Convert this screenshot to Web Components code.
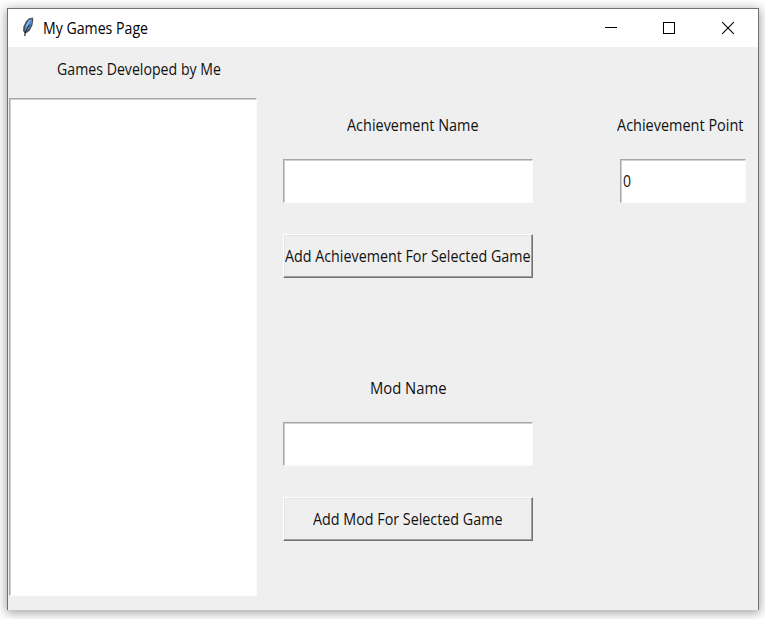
<!DOCTYPE html>
<html lang="en"><head><meta charset="utf-8"><title>My Games Page</title>
<style>
html,body{margin:0;width:765px;height:619px;overflow:hidden;background:#fff}
body{font-family:"Open Sans","Noto Sans",sans-serif;font-size:15.5px;color:#111}
</style></head><body>
<games-page></games-page>
<script>
const define=(name,html,setup)=>customElements.define(name,class extends HTMLElement{
  connectedCallback(){
    if(this.shadowRoot)return;
    const t=document.createElement('template');t.innerHTML=html;
    this.attachShadow({mode:'open'}).append(t.content.cloneNode(true));
    if(setup)setup(this,this.shadowRoot);
  }
});

/* A line of text condensed to the width given in its "width" attribute. */
define('fit-text',`<style>
:host{display:block;height:20px;line-height:20px;white-space:nowrap;flex:none}
span{display:inline-block;transform-origin:0 50%}
</style><span><slot></slot></span>`,(el,root)=>{
  const w=+el.getAttribute('width'),s=root.querySelector('span');
  el.style.width=w+'px';
  s.style.transform='scaleX('+w/s.getBoundingClientRect().width+')';
});

define('feather-icon',`<style>:host{display:block;width:14px;height:21px}svg{display:block}</style>
<svg width="14" height="21" viewBox="0 0 14 21">
<path d="M3.6 16.5 2 13.6 2.5 9.2 5 4.2 8 1.2 11.9 .4 12.3 3 11.4 8.5 8.8 13.6 6 15.8Z" fill="#4a4f57"/>
<path d="M3.8 13.2 4 9.6 6.3 5.1 9 2.4 11.2 1.8 10.7 6.5 8.2 11.3 5.5 14.4Z" fill="#4f8fd3"/>
<path d="M9 3 5.4 9.4" stroke="#8db9e6" stroke-width="1.4"/>
<path d="M8.6 7.6 6 11.6 4.6 15.2" stroke="#172230" stroke-width="1" fill="none"/>
<path d="M4.4 14.5 3.8 19" stroke="#333" stroke-width="1.3"/></svg>`);

define('title-bar',`<style>
:host{display:flex;height:38px;background:#fff;color:#000;align-items:center}
feather-icon{margin:-1px 8px 0 13px}
svg{display:block;margin-left:auto}
</style><feather-icon></feather-icon><fit-text width="105"><slot></slot></fit-text>
<svg width="174" height="38" viewBox="0 0 174 38" fill="none" stroke="#000" shape-rendering="crispEdges">
<path d="M21 18.5H33"/><rect x="79.5" y="13.5" width="11" height="11"/>
<path d="M138.2 13.2 149.8 24.8M149.8 13.2 138.2 24.8" shape-rendering="auto" stroke-width="1.1"/></svg>`);

define('tk-field',`<style>
:host{display:flex;box-sizing:border-box;width:250px;height:44px;background:#fff;align-items:center;
border:1px solid;border-color:#a6a6a6 #fbfbfb #fbfbfb #a6a6a6;box-shadow:inset 1px 1px #d0d0d0;padding-left:2px}
</style><slot></slot>`);

define('tk-button',`<style>
:host{display:flex;box-sizing:border-box;width:250px;height:44px;background:#efefef;align-items:center;justify-content:center;
border:1px solid;border-color:#fff #727272 #727272 #fff;box-shadow:inset -1px -1px #a0a0a0,inset 1px 1px #e4e4e4}
</style><slot></slot>`);

define('field-group',`<style>
:host{display:flex;flex-direction:column;align-items:center}
::slotted(tk-field){margin-top:24px}
::slotted(tk-button){margin-top:31px}
</style><slot></slot>`);

define('games-page',`<style>
:host{display:block;padding:8px 0 0 7px}
.window{box-sizing:border-box;width:752px;height:602px;border:1px solid #707070;border-bottom:0;background:#efefef;
box-shadow:0 2px 10px 1px rgba(0,0,0,.36)}
.content{display:flex;height:563px}
.games{width:249px;padding-left:1px;display:flex;flex-direction:column}
.games fit-text{margin:12px 0 0 47.5px}
.games tk-field{width:248px;height:498px;margin-top:19px}
.forms{width:250px;margin-left:25px;padding-top:68px}
.forms field-group+field-group{margin-top:100px}
.forms .wide{margin-left:9px}
.points{margin-left:82px;padding-top:68px;width:131px}
.points tk-field{width:126px;margin-left:5px}
</style>
<div class="window"><title-bar>My Games Page</title-bar>
<div class="content">
<div class="games"><fit-text width="164">Games Developed by Me</fit-text><tk-field></tk-field></div>
<div class="forms">
<field-group><fit-text class="wide" width="131.5">Achievement Name</fit-text><tk-field></tk-field>
<tk-button><fit-text width="245.5">Add Achievement For Selected Game</fit-text></tk-button></field-group>
<field-group><fit-text width="76.5">Mod Name</fit-text><tk-field></tk-field>
<tk-button><fit-text width="189.5">Add Mod For Selected Game</fit-text></tk-button></field-group>
</div>
<field-group class="points"><fit-text width="126.5">Achievement Point</fit-text><tk-field><fit-text width="8">0</fit-text></tk-field></field-group>
</div></div>`);
</script></body></html>
